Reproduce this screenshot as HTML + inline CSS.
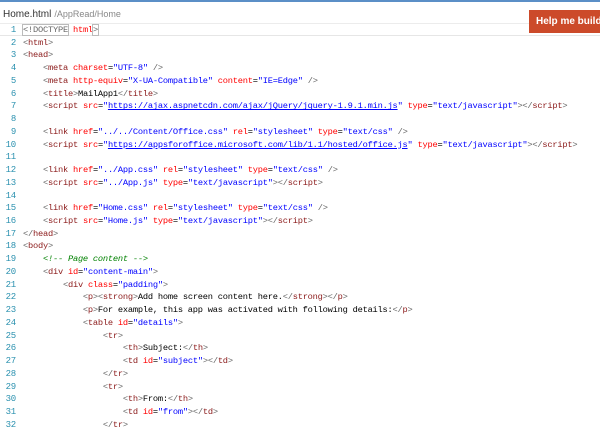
<!DOCTYPE html>
<html><head><meta charset="utf-8"><style>
html,body{margin:0;padding:0;background:#fff;width:600px;height:433px;overflow:hidden;position:relative;font-family:"Liberation Sans",sans-serif}
.top{position:absolute;left:0;top:0;width:600px;height:2px;background:#5b8fc7}
.hdr{position:absolute;left:3px;top:9px;font-size:10px;color:#333}
.hdr span{color:#888;font-size:9px;margin-left:3px}
.line{position:absolute;left:0;top:23px;width:600px;height:1px;background:#ececec}
.line2{position:absolute;left:0;top:35px;width:600px;height:1px;background:#e6e6e6}
.btn{position:absolute;left:529px;top:10px;width:80px;height:23px;background:#cc4a2a;color:#fff;font-size:10px;font-weight:bold;line-height:23px;padding-left:7px;box-sizing:border-box;white-space:nowrap;overflow:hidden}
.code{position:absolute;left:0;top:24px;font-family:"Liberation Mono",monospace;font-size:8.7px;letter-spacing:-0.22px;line-height:12.74px;color:#000}
.r{height:12.74px;white-space:pre}
.n{display:inline-block;width:16px;text-align:right;color:#2b91af;margin-right:7px;font-size:9px}
.d{color:#666}.t{color:#8b1a1a}.a{color:#f00}.v{color:#00f}.c{color:#008000;font-style:italic}.u{color:#00f;text-decoration:underline}
.hl{outline:1px solid #bbb}
</style></head><body>
<div class="top"></div>
<div class="hdr">Home.html<span>/AppRead/Home</span></div>
<div class="line"></div>
<div class="line2"></div>
<div class="btn">Help me build r</div>
<div class="code">
<div class="r"><span class="n">1</span><span class="d hl">&lt;!DOCTYPE</span> <span class="a">html</span><span class="d hl">&gt;</span></div>
<div class="r"><span class="n">2</span><span class="d">&lt;</span><span class="t">html</span><span class="d">&gt;</span></div>
<div class="r"><span class="n">3</span><span class="d">&lt;</span><span class="t">head</span><span class="d">&gt;</span></div>
<div class="r"><span class="n">4</span>    <span class="d">&lt;</span><span class="t">meta</span> <span class="a">charset</span>=<span class="v">"UTF-8"</span> <span class="d">/&gt;</span></div>
<div class="r"><span class="n">5</span>    <span class="d">&lt;</span><span class="t">meta</span> <span class="a">http-equiv</span>=<span class="v">"X-UA-Compatible"</span> <span class="a">content</span>=<span class="v">"IE=Edge"</span> <span class="d">/&gt;</span></div>
<div class="r"><span class="n">6</span>    <span class="d">&lt;</span><span class="t">title</span><span class="d">&gt;</span>MailApp1<span class="d">&lt;/</span><span class="t">title</span><span class="d">&gt;</span></div>
<div class="r"><span class="n">7</span>    <span class="d">&lt;</span><span class="t">script</span> <span class="a">src</span>=<span class="v">"</span><span class="u">https://ajax.aspnetcdn.com/ajax/jQuery/jquery-1.9.1.min.js</span><span class="v">"</span> <span class="a">type</span>=<span class="v">"text/javascript"</span><span class="d">&gt;&lt;/</span><span class="t">script</span><span class="d">&gt;</span></div>
<div class="r"><span class="n">8</span></div>
<div class="r"><span class="n">9</span>    <span class="d">&lt;</span><span class="t">link</span> <span class="a">href</span>=<span class="v">"../../Content/Office.css"</span> <span class="a">rel</span>=<span class="v">"stylesheet"</span> <span class="a">type</span>=<span class="v">"text/css"</span> <span class="d">/&gt;</span></div>
<div class="r"><span class="n">10</span>    <span class="d">&lt;</span><span class="t">script</span> <span class="a">src</span>=<span class="v">"</span><span class="u">https://appsforoffice.microsoft.com/lib/1.1/hosted/office.js</span><span class="v">"</span> <span class="a">type</span>=<span class="v">"text/javascript"</span><span class="d">&gt;&lt;/</span><span class="t">script</span><span class="d">&gt;</span></div>
<div class="r"><span class="n">11</span></div>
<div class="r"><span class="n">12</span>    <span class="d">&lt;</span><span class="t">link</span> <span class="a">href</span>=<span class="v">"../App.css"</span> <span class="a">rel</span>=<span class="v">"stylesheet"</span> <span class="a">type</span>=<span class="v">"text/css"</span> <span class="d">/&gt;</span></div>
<div class="r"><span class="n">13</span>    <span class="d">&lt;</span><span class="t">script</span> <span class="a">src</span>=<span class="v">"../App.js"</span> <span class="a">type</span>=<span class="v">"text/javascript"</span><span class="d">&gt;&lt;/</span><span class="t">script</span><span class="d">&gt;</span></div>
<div class="r"><span class="n">14</span></div>
<div class="r"><span class="n">15</span>    <span class="d">&lt;</span><span class="t">link</span> <span class="a">href</span>=<span class="v">"Home.css"</span> <span class="a">rel</span>=<span class="v">"stylesheet"</span> <span class="a">type</span>=<span class="v">"text/css"</span> <span class="d">/&gt;</span></div>
<div class="r"><span class="n">16</span>    <span class="d">&lt;</span><span class="t">script</span> <span class="a">src</span>=<span class="v">"Home.js"</span> <span class="a">type</span>=<span class="v">"text/javascript"</span><span class="d">&gt;&lt;/</span><span class="t">script</span><span class="d">&gt;</span></div>
<div class="r"><span class="n">17</span><span class="d">&lt;/</span><span class="t">head</span><span class="d">&gt;</span></div>
<div class="r"><span class="n">18</span><span class="d">&lt;</span><span class="t">body</span><span class="d">&gt;</span></div>
<div class="r"><span class="n">19</span>    <span class="c">&lt;!-- Page content --&gt;</span></div>
<div class="r"><span class="n">20</span>    <span class="d">&lt;</span><span class="t">div</span> <span class="a">id</span>=<span class="v">"content-main"</span><span class="d">&gt;</span></div>
<div class="r"><span class="n">21</span>        <span class="d">&lt;</span><span class="t">div</span> <span class="a">class</span>=<span class="v">"padding"</span><span class="d">&gt;</span></div>
<div class="r"><span class="n">22</span>            <span class="d">&lt;</span><span class="t">p</span><span class="d">&gt;&lt;</span><span class="t">strong</span><span class="d">&gt;</span>Add home screen content here.<span class="d">&lt;/</span><span class="t">strong</span><span class="d">&gt;&lt;/</span><span class="t">p</span><span class="d">&gt;</span></div>
<div class="r"><span class="n">23</span>            <span class="d">&lt;</span><span class="t">p</span><span class="d">&gt;</span>For example, this app was activated with following details:<span class="d">&lt;/</span><span class="t">p</span><span class="d">&gt;</span></div>
<div class="r"><span class="n">24</span>            <span class="d">&lt;</span><span class="t">table</span> <span class="a">id</span>=<span class="v">"details"</span><span class="d">&gt;</span></div>
<div class="r"><span class="n">25</span>                <span class="d">&lt;</span><span class="t">tr</span><span class="d">&gt;</span></div>
<div class="r"><span class="n">26</span>                    <span class="d">&lt;</span><span class="t">th</span><span class="d">&gt;</span>Subject:<span class="d">&lt;/</span><span class="t">th</span><span class="d">&gt;</span></div>
<div class="r"><span class="n">27</span>                    <span class="d">&lt;</span><span class="t">td</span> <span class="a">id</span>=<span class="v">"subject"</span><span class="d">&gt;&lt;/</span><span class="t">td</span><span class="d">&gt;</span></div>
<div class="r"><span class="n">28</span>                <span class="d">&lt;/</span><span class="t">tr</span><span class="d">&gt;</span></div>
<div class="r"><span class="n">29</span>                <span class="d">&lt;</span><span class="t">tr</span><span class="d">&gt;</span></div>
<div class="r"><span class="n">30</span>                    <span class="d">&lt;</span><span class="t">th</span><span class="d">&gt;</span>From:<span class="d">&lt;/</span><span class="t">th</span><span class="d">&gt;</span></div>
<div class="r"><span class="n">31</span>                    <span class="d">&lt;</span><span class="t">td</span> <span class="a">id</span>=<span class="v">"from"</span><span class="d">&gt;&lt;/</span><span class="t">td</span><span class="d">&gt;</span></div>
<div class="r"><span class="n">32</span>                <span class="d">&lt;/</span><span class="t">tr</span><span class="d">&gt;</span></div>
</div>
</body></html>
